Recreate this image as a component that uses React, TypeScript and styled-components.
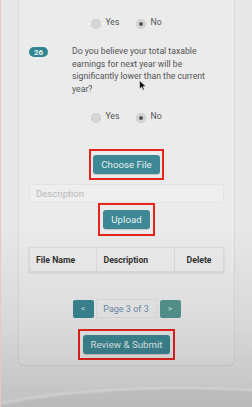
import React from "react";
import styled, { createGlobalStyle } from "styled-components";

const Global = createGlobalStyle`
  html, body { margin: 0; padding: 0; background: #e6e6e6; }
  * { box-sizing: border-box; }
`;

const Screen = styled.div`
  position: relative;
  width: 252px;
  height: 407px;
  overflow: hidden;
  padding-left: 18px;
  font-family: Roboto, "Noto Sans", Arial, sans-serif;
  color: #555;
  border-left: 1px solid #f0c4c4;
  background: #e8e8e8;
  &::after {
    content: "";
    position: absolute;
    inset: 0;
    pointer-events: none;
    background:
      radial-gradient(ellipse 280px 62px at 180px 448px, rgba(0,0,0,0.04) 0%, rgba(0,0,0,0.04) 93%, rgba(255,255,255,0.18) 97%, rgba(255,255,255,0) 100%),
      linear-gradient(180deg, rgba(0,0,0,0) 0%, rgba(0,0,0,0) 55%, rgba(0,0,0,0.07) 80%, rgba(0,0,0,0.13) 92%, rgba(0,0,0,0.17) 100%);
  }
`;

const Card = styled.div`
  width: 217px;
  margin-left: -1px;
  border: 1px solid #d9d9d9;
  border-top: none;
  border-radius: 0 0 6px 6px;
  background: #ebebeb;
  padding: 16px 10px 11px;
  display: flex;
  flex-direction: column;
  align-items: center;
`;

const RadioGroup = styled.div<{ $mt?: number }>`
  display: flex;
  align-items: center;
  gap: 17px;
  height: 12px;
  margin-top: ${(p) => p.$mt ?? 0}px;
`;

const Option = styled.label`
  display: flex;
  align-items: center;
  gap: 4px;
  font-size: 8.7px;
  color: #555;
`;

const Radio = styled.span<{ $checked?: boolean }>`
  width: 10px;
  height: 10px;
  margin-top: 3px;
  border-radius: 50%;
  background: #d6d6d6;
  box-shadow: inset 0 0 0 1px #cfcfcf;
  display: flex;
  align-items: center;
  justify-content: center;
  &::after {
    content: "";
    width: 4px;
    height: 4px;
    border-radius: 50%;
    background: ${(p) => (p.$checked ? "#555" : "transparent")};
  }
`;

const Question = styled.div`
  align-self: stretch;
  display: grid;
  grid-template-columns: 43px 1fr;
  margin-top: 17px;
`;

const Badge = styled.span`
  width: 19px;
  height: 10px;
  margin-top: 2px;
  border-radius: 5px;
  background: #2f8592;
  color: #f2f7f7;
  font-size: 8px;
  font-weight: 700;
  display: flex;
  align-items: center;
  justify-content: center;
`;

const QuestionText = styled.p`
  margin: 0;
  width: 146px;
  font-size: 8.7px;
  line-height: 12.5px;
  color: #555;
`;

const Mark = styled.div<{ $mt: number; $x: number; $y: number }>`
  position: relative;
  margin-top: ${(p) => p.$mt}px;
  &::after {
    content: "";
    position: absolute;
    inset: -${(p) => p.$y}px -${(p) => p.$x}px;
    border: 2px solid #e8231b;
    pointer-events: none;
  }
`;

const TealButton = styled.button`
  display: block;
  height: 19px;
  padding: 0 8px;
  border: none;
  border-radius: 3px;
  background: #3d8894;
  color: #e3efef;
  font-family: Roboto, Arial, sans-serif;
  font-size: 9.7px;
  box-shadow: 0 1px 1px rgba(0,0,0,0.15);
`;

const DescInput = styled.input`
  align-self: stretch;
  height: 19px;
  margin-top: 10px;
  border: 1px solid #e2e2e2;
  border-radius: 3px;
  background: #eeeeee;
  padding: 0 6px;
  font-family: Roboto, Arial, sans-serif;
  font-size: 9.5px;
  color: #555;
  &::placeholder { color: #b8b8b8; }
`;

const Table = styled.table`
  align-self: stretch;
  margin-top: 18px;
  border-collapse: collapse;
  table-layout: fixed;
  box-shadow: 0 1px 2px rgba(0,0,0,0.12);
`;

const Th = styled.th<{ $w: number; $center?: boolean }>`
  width: ${(p) => p.$w}px;
  height: 24px;
  padding: 0 6px;
  border: 1px solid #dcdcdc;
  background: #ececec;
  color: #333;
  font-size: 8.7px;
  font-weight: 700;
  text-align: ${(p) => (p.$center ? "center" : "left")};
`;

const Pager = styled.div`
  display: flex;
  align-items: center;
  gap: 2px;
  margin-top: 27px;
`;

const PageButton = styled.button<{ $disabled?: boolean }>`
  width: 21px;
  height: 18px;
  border: none;
  border-radius: 2px;
  background: ${(p) => (p.$disabled ? "#55968f" : "#3a8692")};
  color: #dcecec;
  font-family: Roboto, Arial, sans-serif;
  font-size: 8px;
  padding: 0;
`;

const PageLabel = styled.span`
  width: 61px;
  height: 19px;
  border: 1px solid #e1e1e1;
  background: #ececec;
  color: #6d8db0;
  font-size: 9px;
  display: flex;
  align-items: center;
  justify-content: center;
  margin-right: 1px;
`;

const Cursor = styled.svg`
  position: absolute;
  left: 138px;
  top: 80px;
`;

export default function App() {
  return (
    <Screen>
      <Global />
      <Card>
        <RadioGroup>
          <Option><Radio />Yes</Option>
          <Option><Radio $checked />No</Option>
        </RadioGroup>
        <Question>
          <Badge>26</Badge>
          <QuestionText>
            Do you believe your total taxable earnings for next year will be significantly lower than the current year?
          </QuestionText>
        </Question>
        <RadioGroup $mt={15}>
          <Option><Radio />Yes</Option>
          <Option><Radio $checked />No</Option>
        </RadioGroup>
        <Mark $mt={33} $x={4} $y={6}>
          <TealButton>Choose File</TealButton>
        </Mark>
        <DescInput placeholder="Description" />
        <Mark $mt={7} $x={5} $y={7}>
          <TealButton>Upload</TealButton>
        </Mark>
        <Table>
          <thead>
            <tr>
              <Th $w={68}>File Name</Th>
              <Th $w={78}>Description</Th>
              <Th $w={49} $center>Delete</Th>
            </tr>
          </thead>
        </Table>
        <Pager>
          <PageButton>&lt;</PageButton>
          <PageLabel>Page 3 of 3</PageLabel>
          <PageButton $disabled>&gt;</PageButton>
        </Pager>
        <Mark $mt={17} $x={5} $y={6}>
          <TealButton>Review &amp; Submit</TealButton>
        </Mark>
      </Card>
      <Cursor width="8" height="11" viewBox="0 0 8 11">
        <path d="M0.5 0.5 L0.5 9 L2.6 7 L4 10.2 L5.4 9.6 L4 6.5 L7 6.5 Z" fill="#111" stroke="#eee" strokeWidth="0.6" />
      </Cursor>
    </Screen>
  );
}
